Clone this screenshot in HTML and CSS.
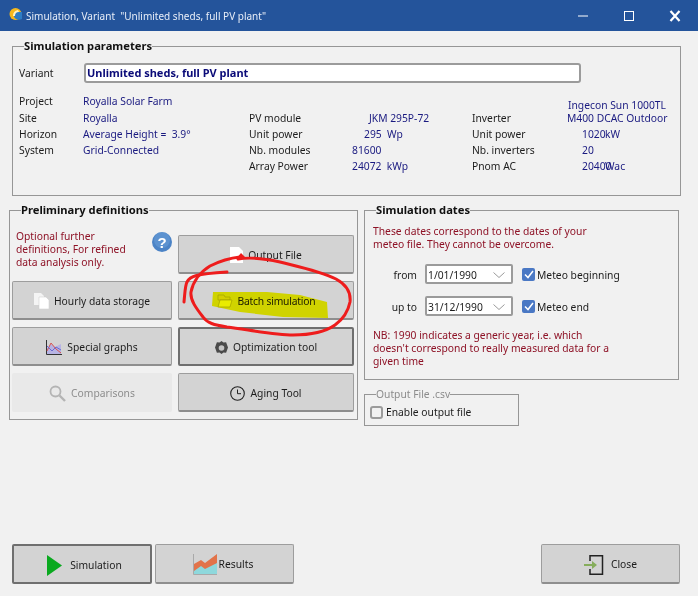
FILE: index.html
```html
<!doctype html>
<html>
<head>
<meta charset="utf-8">
<title>Simulation, Variant</title>
<link rel="stylesheet" href="styles.css">
</head>
<body>
<div class="window">
	<div class="titlebar">
		<svg class="app-icon" width="14" height="14" viewBox="0 0 14 14"><circle cx="6.5" cy="7" r="6" fill="#f5b81c"/><path d="M5 5h8v7a6 6 0 0 1-8-2z" fill="#2e7cc4"/><path d="M4 9a6 6 0 0 1 5-6l1 2a4 4 0 0 0-4 4z" fill="#fff3c4"/></svg>
		<span class="title">Simulation, Variant &nbsp;"Unlimited sheds, full PV plant"</span>
		<svg class="win-btn" width="12" height="12" viewBox="0 0 12 12"><path d="M1 6h10" stroke="#fff" stroke-width="1"/></svg>
		<svg class="win-btn" width="12" height="12" viewBox="0 0 12 12"><rect x="1.5" y="1.5" width="9" height="9" fill="none" stroke="#fff"/></svg>
		<svg class="win-btn" width="12" height="12" viewBox="0 0 12 12"><path d="M1.5 1l9 10M10.5 1l-9 10" stroke="#fff" stroke-width="2.2"/></svg>
	</div>

	<div class="group params">
		<div class="legend">Simulation parameters</div>
		<div class="variant-row">
			<span class="variant-label">Variant</span>
			<div class="variant-input">Unlimited sheds, full PV plant</div>
		</div>
		<div class="info-grid">
			<span>Project</span><span class="val wide">Royalla Solar Farm</span><span></span><span></span><span></span><span class="val model top">Ingecon Sun 1000TL</span>
			<span>Site</span><span class="val">Royalla</span><span>PV module</span><span class="val in-17">JKM 295P-72</span><span>Inverter</span><span class="val">M400 DCAC Outdoor</span>
			<span>Horizon</span><span class="val">Average Height = &nbsp;3.9°</span><span>Unit power</span><span class="val in-12">295 &nbsp;Wp</span><span>Unit power</span><span class="val in-15"><span class="num">1020</span>kW</span>
			<span>System</span><span class="val">Grid-Connected</span><span>Nb. modules</span><span class="val">81600</span><span>Nb. inverters</span><span class="val in-15">20</span>
			<span></span><span></span><span>Array Power</span><span class="val">24072 &nbsp;kWp</span><span>Pnom AC</span><span class="val in-15"><span class="num">20400</span>Wac</span>
		</div>
	</div>

	<div class="middle">
		<div class="group prelim">
			<div class="legend">Preliminary definitions</div>
			<div class="btn-grid">
				<div class="note-cell">
					<p class="note">Optional further definitions, For refined data analysis only.</p>
					<svg class="help" width="20" height="20" viewBox="0 0 20 20"><circle cx="10" cy="10" r="10" fill="#4b83c6"/><circle cx="10" cy="8" r="8" fill="#6ea2da" opacity=".5"/><text x="10" y="15.5" text-anchor="middle" class="help-mark">?</text></svg>
				</div>
				<div class="btn">
					<svg width="13" height="16" viewBox="0 0 13 16"><path d="M0 0h9l4 4v12H0z" fill="#fff"/></svg>
					<span>Output File</span>
				</div>
				<div class="btn">
					<svg width="15" height="16" viewBox="0 0 15 16"><path d="M0 0h7l3 3v9H0z" fill="#f4f4f4"/><path d="M5 4h7l3 3v9H5z" fill="#fff" stroke="#c9c9c9" stroke-width=".5"/></svg>
					<span>Hourly data storage</span>
				</div>
				<div class="btn">
					<svg width="16" height="14" viewBox="0 0 16 14"><path d="M1 1h6l1 2h5v3H1z" fill="#d6cf3c" stroke="#a5a03a" stroke-width=".7"/><path d="M3 6h12l-2 7H1z" fill="#ecec30" stroke="#a5a03a" stroke-width=".7"/></svg>
					<span class="tight">Batch simulation</span>
				</div>
				<div class="btn">
					<svg width="16" height="15" viewBox="0 0 16 15"><path d="M.5 0v14.500H16" fill="none" stroke="#333"/><path d="M1 8l4-4 4 3 6-3v10H1z" fill="#b7b4e4"/><path d="M1 11l4-8 5 6 5 4" fill="none" stroke="#d9534f"/><path d="M1 6l5 5 4-4 5 3" fill="none" stroke="#6a6ad0"/></svg>
					<span>Special graphs</span>
				</div>
				<div class="btn focused">
					<svg width="13" height="14" viewBox="0 0 13 14"><path d="M6.5 0l2 1.6 2.6-.3.9 2.4 1 2.8-1 2.8-.9 2.4-2.600-.3-2 1.600-2-1.600-2.600.3-.9-2.400L0 6.500l1-2.800.9-2.400 2.600.3z" fill="#4a4a4a"/><circle cx="6.500" cy="7" r="2.800" fill="#c4c4c4"/></svg>
					<span>Optimization tool</span>
				</div>
				<div class="btn disabled">
					<svg width="17" height="17" viewBox="0 0 17 17"><circle cx="6.500" cy="6.500" r="5" fill="none" stroke="#b4b4b4" stroke-width="1.800"/><path d="M10.500 10.500l5.500 5.500" stroke="#b4b4b4" stroke-width="2.400"/></svg>
					<span>Comparisons</span>
				</div>
				<div class="btn">
					<svg width="15" height="15" viewBox="0 0 15 15"><circle cx="7.500" cy="7.500" r="6.800" fill="none" stroke="#222" stroke-width="1.100"/><path d="M7.500 3.500v4.200h3.500" fill="none" stroke="#222"/></svg>
					<span>Aging Tool</span>
				</div>
			</div>
		</div>

		<div class="side">
			<div class="group dates">
				<div class="legend">Simulation dates</div>
				<p class="note">These dates correspond to the dates of your meteo file. They cannot be overcome.</p>
				<div class="date-row">
					<span class="date-label date-text">from</span>
					<div class="combo date-text">1/01/1990<svg width="12" height="6" viewBox="0 0 12 6"><path d="M.5 .5L6 5.500 11.500 .5" fill="none" stroke="#9a9a9a"/></svg></div>
					<span class="check"><svg width="10" height="9" viewBox="0 0 10 9"><path d="M1 4.500l3 3L9 1" fill="none" stroke="#fff" stroke-width="1.500"/></svg></span>
					<span class="date-text">Meteo beginning</span>
				</div>
				<div class="date-row">
					<span class="date-label date-text">up to</span>
					<div class="combo date-text">31/12/1990<svg width="12" height="6" viewBox="0 0 12 6"><path d="M.5 .5L6 5.500 11.500 .5" fill="none" stroke="#9a9a9a"/></svg></div>
					<span class="check"><svg width="10" height="9" viewBox="0 0 10 9"><path d="M1 4.500l3 3L9 1" fill="none" stroke="#fff" stroke-width="1.500"/></svg></span>
					<span class="date-text">Meteo end</span>
				</div>
				<p class="note nb">NB: 1990 indicates a generic year, i.e. which doesn't correspond to really measured data for a given time</p>
			</div>
			<div class="group output">
				<div class="legend muted">Output File .csv</div>
				<div class="enable-row">
					<span class="check off"></span>
					<span>Enable output file</span>
				</div>
			</div>
		</div>
	</div>

	<div class="footer">
		<div class="btn focused sim-btn">
			<svg width="15" height="21" viewBox="0 0 15 21"><path d="M0 0l15 10.500L0 21z" fill="#0aa91f"/></svg>
			<span>Simulation</span>
		</div>
		<div class="btn results-btn">
			<svg width="24" height="21" viewBox="0 0 24 21"><path d="M1 14l7-5 4 3 12-6v14H1z" fill="#8ed8dc"/><path d="M1 10l7-4 4 3L24 0v9l-12 6-4-3-7 5z" fill="#e2734a"/><path d="M.5 0v20.500H24" fill="none" stroke="#a9a9a9"/></svg>
			<span>Results</span>
		</div>
		<div class="btn close">
			<svg width="20" height="20" viewBox="0 0 20 20"><path d="M6 6V.8h12.500v18.400H6V14" fill="none" stroke="#222" stroke-width="1.500"/><path d="M0 10h10" stroke="#86ad5b" stroke-width="2"/><path d="M8 6l5 4-5 4z" fill="#86ad5b"/></svg>
			<span>Close</span>
		</div>
	</div>

	<svg class="markup" width="698" height="596" viewBox="0 0 698 596">
		<path class="marker" d="M213 292L267 292 300 295 327 302 328 318 283 317 240 312 212 306z"/>
		<path class="arrow-tip" d="M236 259L241 253 245 257 241 259z"/>
		<path class="scribble" d="M184 302C185 292 185 286 187 282 190 276 196 274 227 272"/>
		<path class="scribble" d="M238 259C250 257 262 258 280 262 300 267 320 271 336 279 347 285 351 293 350 302 348 312 342 320 335 325 325 332 310 335 293 335 275 335 250 330 227 327 214 325 207 323 203 317 196 308 190 300 191 292 193 282 200 272 210 266 220 261 230 258 240 257"/>
	</svg>
</div>
</body>
</html>
```

FILE: styles.css
```css
*{
	margin:0;
	padding:0;
	box-sizing:border-box;
}
body{
	background:#f1f1f1;
	font-family:"Noto Sans","Liberation Sans",sans-serif;
	font-size:10.300px;
	line-height:13px;
	color:#1c1c1c;
	overflow:hidden;
}
.window{
	position:relative;
	width:698px;
	height:596px;
	display:flex;
	flex-direction:column;
}

/* title bar */
.titlebar{
	height:31px;
	background:#24549b;
	color:#e8eef8;
	display:flex;
	align-items:center;
	padding:0 17px 0 8px;
	font-size:10px;
}
.app-icon{
	margin:-4px 3px 0 1px;
}
.title{
	flex:1;
	padding-top:2px;
}
.win-btn{
	margin-left:34px;
}

/* groups */
.group{
	position:relative;
	border:1px solid #969696;
}
.legend{
	position:absolute;
	top:-8px;
	left:11px;
	background:#f1f1f1;
	font-weight:bold;
	font-size:11.200px;
	line-height:14px;
	color:#111;
}
.legend.muted{
	font-weight:normal;
	font-size:10.300px;
	color:#8c8c8c;
}
.params{
	width:669px;
	height:150px;
	margin:15px 0 0 12px;
	padding:16px 6px 0;
}
.variant-row{
	display:flex;
	align-items:center;
	height:20px;
}
.variant-label{
	width:65px;
}
.variant-input{
	width:497px;
	height:20px;
	background:#fff;
	border:2px solid #9b9b9b;
	border-radius:3px;
	padding-left:1px;
	font-weight:bold;
	font-size:11px;
	line-height:15px;
	color:#0a0a78;
}
.info-grid{
	display:grid;
	grid-template-columns:64px 166px 103px 120px 95px 110px;
	grid-template-rows:17px 16px 16px 16px 16px;
	align-items:center;
	margin-top:10px;
	white-space:nowrap;
}
.val{
	color:#1a1a80;
}
.model{
	margin-left:1px;
}
.top{
	margin-top:8px;
}
.in-12{
	margin-left:12px;
}
.in-15{
	margin-left:15px;
}
.in-17{
	margin-left:17px;
}
.num{
	display:inline-block;
	width:23px;
}

/* middle */
.middle{
	display:flex;
	gap:6px;
	margin:14px 0 0 9px;
}
.prelim{
	width:349px;
	height:210px;
	padding:24px 0 0 2px;
}
.btn-grid{
	display:grid;
	grid-template-columns:160px 176px;
	grid-auto-rows:39px;
	gap:7px 6px;
}
.note-cell{
	display:flex;
	justify-content:space-between;
	margin-top:-5px;
	padding-left:4px;
}
.note{
	color:#8e1226;
}
.note-cell .note{
	width:115px;
}
.help{
	margin-top:2px;
}
.help-mark{
	font-family:"Liberation Sans",sans-serif;
	font-size:15px;
	font-weight:bold;
	fill:#fff;
}

/* buttons */
.btn{
	display:flex;
	align-items:center;
	justify-content:center;
	gap:5px;
	padding-top:2px;
	background:#d3d3d3;
	border:1px solid #9d9d9d;
	border-bottom:2px solid #8e8e8e;
	border-radius:2px;
	white-space:nowrap;
}
.btn.focused{
	border:2px solid #6f6f6f;
}
.btn.disabled{
	background:#e9e9e9;
	border-color:#e9e9e9;
	color:#8d8d8d;
}
.tight{
	letter-spacing:-.2px;
}

/* right column */
.side{
	display:flex;
	flex-direction:column;
	gap:14px;
}
.dates{
	width:315px;
	height:170px;
	padding:14px 5px 0 8px;
}
.dates .note{
	width:240px;
}
.date-row{
	display:flex;
	align-items:center;
	height:20px;
	margin-top:13px;
}
.date-row + .date-row{
	margin-top:12px;
}
.date-text{
	padding-top:2px;
}
.date-label{
	width:52px;
	text-align:right;
	padding-right:8px;
}
.combo{
	width:88px;
	height:20px;
	background:#fff;
	border:2px solid #9b9b9b;
	border-radius:2px;
	padding-left:1px;
	display:flex;
	align-items:center;
	justify-content:space-between;
	padding-right:6px;
}
.check{
	width:13px;
	height:13px;
	margin:0 2px 0 9px;
	background:#4a78c4;
	border-radius:2px;
	display:flex;
	align-items:center;
	justify-content:center;
}
.check.off{
	margin:0 3px 0 0;
	background:#f1f1f1;
	border:2px solid #9b9b9b;
	border-radius:3px;
}
.note.nb{
	margin-top:13px;
}
.output{
	width:155px;
	height:32px;
	padding:11px 0 0 5px;
}
.enable-row{
	display:flex;
	align-items:center;
}

/* footer */
.footer{
	margin-top:auto;
	display:flex;
	gap:3px;
	height:40px;
	margin-bottom:12px;
	padding-left:12px;
}
.footer .btn{
	width:139px;
}
.footer .sim-btn{
	width:140px;
	gap:8px;
	padding-left:5px;
}
.footer .results-btn{
	gap:2px;
	padding-right:3px;
}
.footer .close{
	gap:7px;
	margin-left:auto;
	margin-right:18px;
}

/* hand drawn markup over the window */
.markup{
	position:absolute;
	top:0;
	left:0;
	pointer-events:none;
}
.marker{
	fill:#fcff00;
	mix-blend-mode:multiply;
}
.arrow-tip{
	fill:#ee1c1c;
}
.scribble{
	fill:none;
	stroke:#ee1c1c;
	stroke-width:3;
	stroke-linecap:round;
}
```
